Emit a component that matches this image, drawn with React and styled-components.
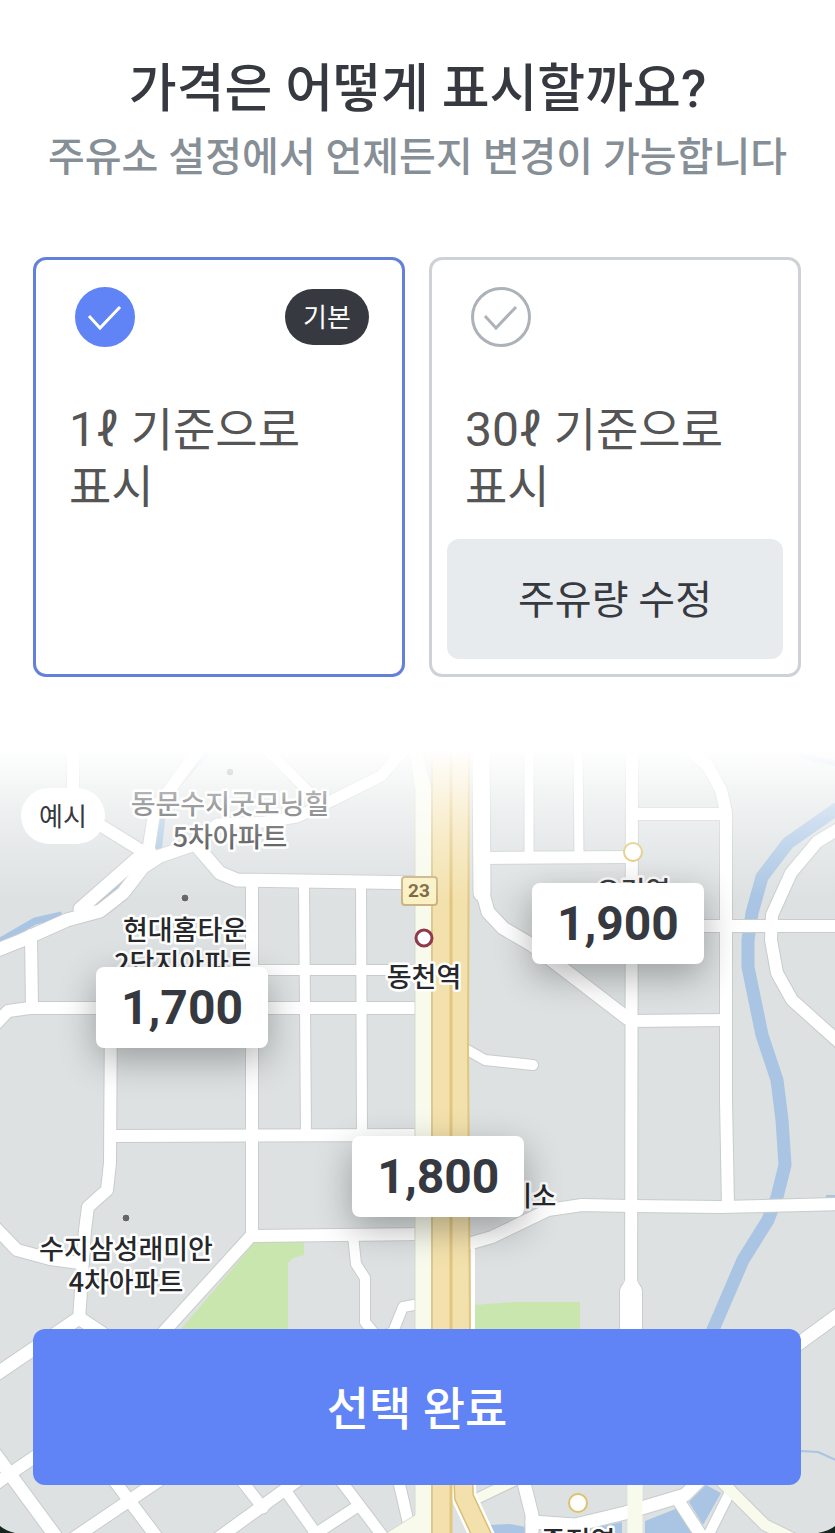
import React, {useState} from 'react';
import styled, {createGlobalStyle} from "styled-components";

const GlobalStyle = createGlobalStyle`
  * {
    box-sizing: border-box;
  }

  body {
    margin: 0;
    background: #fff;
    font-family: Roboto, 'Noto Sans CJK KR', sans-serif;
    color: #36393f;
  }

  h1, p {
    margin: 0;
  }

  button {
    font-family: inherit;
    border: none;
    cursor: pointer;
  }
`

const rivers = [
    {d: 'M838 808 L788 843 L762 877 L752 913 L748 940 L748 967 L762 1035 L777 1080 L782 1120 L785 1165 L777 1197 L768 1220 L743 1260 L712 1332', w: 13},
    {d: 'M800 755 L838 764', w: 6},
    {d: 'M209 750 L164 798 L158 852', w: 7},
    {d: 'M147 860 L98 905', w: 5},
    {d: 'M-3 943 L35 921 L62 915', w: 7},
    {d: 'M800 1451 L818 1452 L838 1461', w: 2},
    {d: 'M826 1197 L838 1197', w: 4},
];

const roads = [
    {d: 'M73 745 L73 795 L100 825 L150 856', w: 12},
    {d: 'M202 745 L168 792 L155 808 L148 852', w: 12},
    {d: 'M-5 951 L20 941 L67 920 L100 911 L123 893 L143 867 L160 856 L195 844 L220 873 L237 880 L425 883', w: 13},
    {d: 'M80 909 L137 859 L150 852', w: 13},
    {d: 'M195 844 L217 824 L265 822 L297 817 L333 800 L381 776 L408 745', w: 11},
    {d: 'M262 745 L310 793 L325 803', w: 10},
    {d: 'M252 883 L252 1235', w: 12},
    {d: 'M304 883 L306 1136', w: 10},
    {d: 'M361 883 L362 1136', w: 10},
    {d: 'M252 970 L425 970', w: 10},
    {d: 'M-8 1028 L8 1011 L30 1008 L425 1008', w: 12},
    {d: 'M31 935 L32 1008', w: 12},
    {d: 'M111 1008 L110 1163 L107 1190 L88 1207 L85 1230 L79 1320', w: 12},
    {d: 'M111 1136 L425 1135', w: 12},
    {d: 'M425 1234 L251 1236 L160 1336', w: 12},
    {d: 'M-8 1224 L17 1250 L50 1259 L80 1263', w: 12},
    {d: 'M353 1235 L356 1264 L365 1278 L365 1322 L378 1338 L393 1332 L403 1307 L425 1303', w: 10},
    {d: 'M-8 1377 L79 1318 L130 1352', w: 13},
    {d: 'M-10 1488 L8 1475 L45 1450', w: 12},
    {d: 'M-10 1447 L62 1545', w: 13},
    {d: 'M110 1475 L165 1548', w: 12},
    {d: 'M65 1544 L170 1473', w: 12},
    {d: 'M235 1472 L263 1508', w: 11},
    {d: 'M210 1544 L305 1475', w: 12},
    {d: 'M285 1490 L322 1542', w: 11},
    {d: 'M312 1536 L355 1508', w: 11},
    {d: 'M335 1473 L387 1542', w: 11},
    {d: 'M398 1478 L410 1530', w: 11},
    {d: 'M481 745 L482 893', w: 17},
    {d: 'M482 890 L488 912 L503 928 L532 945 L627 1018', w: 13},
    {d: 'M529 745 L529 858', w: 9},
    {d: 'M578 745 L579 858', w: 9},
    {d: 'M482 858 L632 857', w: 12},
    {d: 'M632 745 L631 1340', w: 12},
    {d: 'M632 814 L726 814', w: 12},
    {d: 'M684 745 L708 766 L721 790 L726 812 L726 1100 L728 1206', w: 12},
    {d: 'M704 926 L845 926', w: 12},
    {d: 'M840 828 L817 842 L791 873 L772 915 L771 940 L777 973 L792 1000 L840 1043', w: 12},
    {d: 'M631 1021 L726 1020', w: 12},
    {d: 'M462 1047 L485 1060 L533 1065', w: 10},
    {d: 'M468 1244 L492 1237 L548 1210 L582 1205 L631 1206 L720 1207 L840 1204', w: 12},
    {d: 'M631 1292 L631 1340', w: 22},
    {d: 'M842 1312 L790 1350', w: 13},
    {d: 'M522 1475 L532 1515 L532 1545', w: 13},
    {d: 'M532 1522 L575 1525 L625 1513 L685 1495 L705 1475', w: 13},
    {d: 'M678 1500 L704 1540', w: 12},
    {d: 'M731 1490 L706 1540', w: 10},
];

const mapLabels = [
    {x: 230, y: 814, text: '동문수지굿모닝힐'},
    {x: 230, y: 847, text: '5차아파트'},
    {x: 185, y: 940, text: '현대홈타운'},
    {x: 184, y: 973, text: '2단지아파트'},
    {x: 424, y: 987, text: '동천역'},
    {x: 633, y: 901, text: '오리역'},
    {x: 519, y: 1206, text: '휴게소'},
    {x: 126, y: 1259, text: '수지삼성래미안'},
    {x: 126, y: 1292, text: '4차아파트'},
    {x: 578, y: 1551, text: '죽전역'},
];

const prices = [
    {id: 'a', left: '11.5%', top: 227, price: '1,700'},
    {id: 'b', left: '63.7%', top: 143, price: '1,900'},
    {id: 'c', left: '42.2%', top: 396, price: '1,800'},
];

const MapDrawing = () => {
    return (
        <MapSvg viewBox="0 740 835 793" preserveAspectRatio="xMidYMin slice" aria-hidden="true">
            <defs>
                <linearGradient id="fade" gradientUnits="userSpaceOnUse" x1="0" y1="750" x2="0" y2="900">
                    <stop offset="0" stopColor="#fff" stopOpacity="1"/>
                    <stop offset="0.14" stopColor="#fff" stopOpacity="0.82"/>
                    <stop offset="0.36" stopColor="#fff" stopOpacity="0.56"/>
                    <stop offset="0.57" stopColor="#fff" stopOpacity="0.35"/>
                    <stop offset="1" stopColor="#fff" stopOpacity="0"/>
                </linearGradient>
            </defs>

            <rect x="0" y="740" width="835" height="793" fill="#dde1e2"/>

            {/* parks and water */}
            <path d="M255 1242 H304 V1255 L293 1258 L288 1263 V1335 H176 Z" fill="#c8e6ae"/>
            <path d="M474 1305 L515 1302 H580 V1335 H474 Z" fill="#c8e6ae"/>
            <g fill="none" stroke="#a9c5e3" strokeLinejoin="round">
                {rivers.map((r) => <path key={r.d} d={r.d} strokeWidth={r.w}/>)}
            </g>
            <path d="M645 1521 L678 1508 L694 1534 H645 Z M689 1502 L706 1485 L721 1493 L703 1525 Z M488 1525 L510 1524 L526 1527 V1534 H492 Z M570 1533 L622 1522 V1534 Z"
                  fill="#a9c5e3"/>

            {/* roads, edges first */}
            <g fill="none" stroke="#c9cccd" strokeLinejoin="round" strokeLinecap="round">
                {roads.map((r) => <path key={r.d} d={r.d} strokeWidth={r.w + 2}/>)}
                <path d="M718 1478 L765 1525 L800 1542" strokeWidth="13"/>
                <path d="M472 1501 L518 1479" strokeWidth="12"/>
            </g>
            <g fill="none" stroke="#fff" strokeLinejoin="round" strokeLinecap="round">
                {roads.map((r) => <path key={r.d} d={r.d} strokeWidth={r.w}/>)}
            </g>
            <path d="M626 1278 H636 L642 1292 H620 Z" fill="#fff"/>
            <g fill="none" stroke="#f8faec" strokeLinejoin="round">
                <path d="M718 1478 L765 1525 L800 1542" strokeWidth="11"/>
                <path d="M472 1501 L518 1479" strokeWidth="10"/>
                <path d="M635 1478 V1535" strokeWidth="15"/>
            </g>

            {/* highway */}
            <path d="M408 745 L415 790 V1515 L385 1534 H432 V790 L421 745 Z" fill="#f8faec" stroke="#d6d9d0"/>
            <path d="M473 1240 V1485" stroke="#fff" strokeWidth="4"/>
            <path d="M463 1475 L464 1497 L484 1540" fill="none" stroke="#fff" strokeWidth="25"/>
            <path d="M463 1475 L464 1497 L484 1540" fill="none" stroke="#dcbf73" strokeWidth="20"/>
            <path d="M463 1475 L464 1497 L484 1540" fill="none" stroke="#f3e1ad" strokeWidth="17"/>
            <path d="M433 745 H469 L468 1050 L471 1480 H452 V1534 H433 Z" fill="#f3e1ad"/>
            <path d="M469 745 L468 1050 L471 1480" fill="none" stroke="#e2c67e" strokeWidth="2"/>
            <path d="M432 745 V1534" stroke="#ddc98e" strokeWidth="2"/>
            <path d="M451 745 V1534" stroke="#e2c67e" strokeWidth="3"/>

            <rect x="402" y="877" width="35" height="28" rx="3" fill="#faf2c4" stroke="#cdb285" strokeWidth="2"/>
            <RoadNumber x="419" y="897">23</RoadNumber>

            <circle cx="424" cy="938" r="8" fill="#fff" stroke="#8f3a4c" strokeWidth="3"/>
            <circle cx="633" cy="852" r="9" fill="#fff" stroke="#dec26a" strokeWidth="2"/>
            <circle cx="578" cy="1503" r="9" fill="#fff" stroke="#dec26a" strokeWidth="2"/>
            <g fill="#666" stroke="#eef0f0" strokeWidth="1">
                <circle cx="230" cy="772" r="4"/>
                <circle cx="185" cy="898" r="4"/>
                <circle cx="126" cy="1218" r="4"/>
            </g>

            {mapLabels.map((l) => <PlaceName key={l.text} x={l.x} y={l.y}>{l.text}</PlaceName>)}

            <rect x="0" y="740" width="835" height="160" fill="url(#fade)"/>
            <path d="M0 1526 Q6 1531 15 1533 H0 Z M835 1526 Q829 1531 818 1533 H835 Z" fill="#17261f"/>
        </MapSvg>
    );
};

const PriceOption = ({value, amount, badge, selected, onSelect, children}) => {
    return (
        <OptionCard $selected={selected}>
            <OptionLabel>
                <OptionHead>
                    <RadioWrapper>
                        <Radio
                            type="radio"
                            name="price-unit"
                            value={value}
                            checked={selected}
                            onChange={() => onSelect(value)}
                        />
                        <CheckIcon viewBox="0 0 60 60" $selected={selected} aria-hidden="true">
                            <path d="M14 29 L25 41 L45 20"/>
                        </CheckIcon>
                    </RadioWrapper>
                    {badge && <Badge $dark>{badge}</Badge>}
                </OptionHead>
                <OptionText><Amount>{amount} </Amount>기준으로<br/>표시</OptionText>
            </OptionLabel>
            {children}
        </OptionCard>
    );
};

const App = () => {
    const [unit, setUnit] = useState('1');

    return (
        <Page>
            <GlobalStyle/>

            <Header>
                <Title>가격은 어떻게 표시할까요?</Title>
                <SubTitle>주유소 설정에서 언제든지 변경이 가능합니다</SubTitle>
            </Header>

            <Options>
                <PriceOption value="1" amount="1ℓ" badge="기본" selected={unit === '1'} onSelect={setUnit}/>
                <PriceOption value="30" amount="30ℓ" selected={unit === '30'} onSelect={setUnit}>
                    <EditButton type="button">주유량 수정</EditButton>
                </PriceOption>
            </Options>

            <MapArea>
                <MapDrawing/>
                <ExampleBadge>예시</ExampleBadge>
                {prices.map((p) => (
                    <PriceTag key={p.id} $left={p.left} $top={p.top}>{p.price}</PriceTag>
                ))}
                <SubmitButton type="button">선택 완료</SubmitButton>
            </MapArea>
        </Page>
    );
};

const Page = styled.main`
  display: flex;
  flex-direction: column;
  min-height: 100vh;
`

const Header = styled.header`
  padding: 56px 20px 0;
  text-align: center;
`

const Title = styled.h1`
  font-size: 52px;
  font-weight: 500;
  line-height: 68px;
  color: #36393f;
`

const SubTitle = styled.p`
  font-size: 40px;
  font-weight: 500;
  line-height: 68px;
  color: #868e96;
`

const Options = styled.div`
  display: grid;
  grid-template-columns: repeat(2, 1fr);
  gap: 24px;
  padding: 65px 34px 63px 33px;
`

const OptionCard = styled.div`
  display: flex;
  flex-direction: column;
  justify-content: space-between;
  min-height: 420px;
  padding: 27px 15px 15px;
  border: 3px solid ${(props) => props.$selected ? '#6381da' : '#ced1d6'};
  border-radius: 13px;
`

const OptionLabel = styled.label`
  display: block;
  padding: 0 18px;
  cursor: pointer;
`

const OptionHead = styled.span`
  display: flex;
  align-items: center;
  justify-content: space-between;
  padding-left: 6px;
`

const RadioWrapper = styled.span`
  position: relative;
  width: 60px;
  height: 60px;
`

const Radio = styled.input`
  appearance: none;
  display: block;
  width: 60px;
  height: 60px;
  margin: 0;
  border: 3px solid #adb2b8;
  border-radius: 50%;
  cursor: pointer;

  &:checked {
    background: #6083f5;
    border-color: #6083f5;
  }
`

const CheckIcon = styled.svg`
  position: absolute;
  inset: 0;
  fill: none;
  stroke: ${(props) => props.$selected ? '#fff' : '#adb2b8'};
  stroke-width: 3;
  pointer-events: none;
`

const Badge = styled.span`
  display: flex;
  align-items: center;
  justify-content: center;
  width: 84px;
  height: 56px;
  padding-bottom: 4px;
  border-radius: 28px;
  font-size: 26px;
  background: ${(props) => props.$dark ? '#36393f' : '#fff'};
  color: ${(props) => props.$dark ? '#fff' : '#36393f'};
`

const OptionText = styled.span`
  display: block;
  margin-top: 55px;
  font-size: 46px;
  line-height: 57px;
  color: #555;
`

const Amount = styled.span`
  font-size: 48px;
  line-height: 1;
`

const EditButton = styled.button`
  height: 120px;
  padding: 0 0 5px;
  border-radius: 12px;
  background: #e8ebee;
  font-size: 40px;
  color: #36393f;
`

const MapArea = styled.section`
  position: relative;
  display: flex;
  flex: 1;
  flex-direction: column;
  justify-content: space-between;
  min-height: 793px;
  padding: 48px 34px 48px 33px;
  overflow: hidden;
`

const MapSvg = styled.svg`
  position: absolute;
  top: 0;
  left: 0;
  width: 100%;
  height: 100%;
`

const PlaceName = styled.text`
  font-family: 'Noto Sans CJK KR', sans-serif;
  font-size: 27px;
  font-weight: 500;
  text-anchor: middle;
  fill: #26282b;
  stroke: #fff;
  stroke-width: 5px;
  stroke-linejoin: round;
  paint-order: stroke;
`

const RoadNumber = styled.text`
  font-family: Roboto, sans-serif;
  font-size: 19px;
  font-weight: 700;
  text-anchor: middle;
  fill: #7d6541;
`

const ExampleBadge = styled(Badge)`
  position: relative;
  margin-left: -12px;
`

const PriceTag = styled.div`
  position: absolute;
  left: ${(props) => props.$left};
  top: ${(props) => props.$top}px;
  padding: 0 25px;
  border-radius: 8px;
  background: #fff;
  box-shadow: 0 12px 36px rgba(0, 0, 0, 0.3);
  font-size: 48px;
  font-weight: 700;
  line-height: 81px;
  color: #36393f;
`

const SubmitButton = styled.button`
  position: relative;
  height: 156px;
  padding: 0 0 5px;
  border-radius: 12px;
  background: #6083f5;
  font-size: 46px;
  font-weight: 500;
  color: #fff;
`

export default App;
